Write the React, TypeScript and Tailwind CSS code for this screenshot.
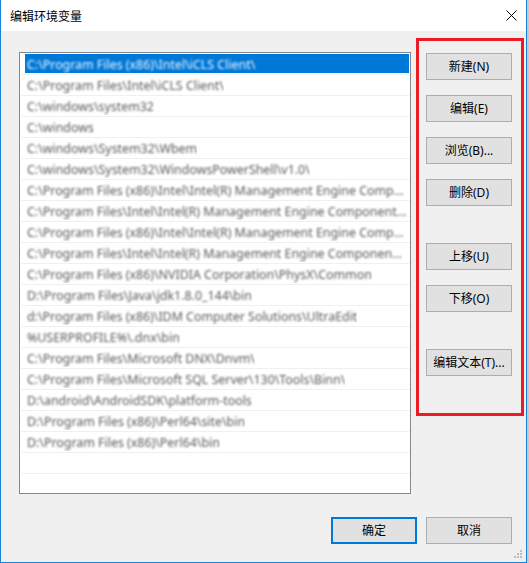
import React from "react";

const items = [
  "C:\\Program Files (x86)\\Intel\\iCLS Client\\",
  "C:\\Program Files\\Intel\\iCLS Client\\",
  "C:\\windows\\system32",
  "C:\\windows",
  "C:\\windows\\System32\\Wbem",
  "C:\\windows\\System32\\WindowsPowerShell\\v1.0\\",
  "C:\\Program Files (x86)\\Intel\\Intel(R) Management Engine Comp...",
  "C:\\Program Files\\Intel\\Intel(R) Management Engine Component...",
  "C:\\Program Files (x86)\\Intel\\Intel(R) Management Engine Comp...",
  "C:\\Program Files\\Intel\\Intel(R) Management Engine Componen...",
  "C:\\Program Files (x86)\\NVIDIA Corporation\\PhysX\\Common",
  "D:\\Program Files\\Java\\jdk1.8.0_144\\bin",
  "d:\\Program Files (x86)\\IDM Computer Solutions\\UltraEdit",
  "%USERPROFILE%\\.dnx\\bin",
  "C:\\Program Files\\Microsoft DNX\\Dnvm\\",
  "C:\\Program Files\\Microsoft SQL Server\\130\\Tools\\Binn\\",
  "D:\\android\\AndroidSDK\\platform-tools",
  "D:\\Program Files (x86)\\Perl64\\site\\bin",
  "D:\\Program Files (x86)\\Perl64\\bin",
  "",
  "",
];

const font = { fontFamily: '"Noto Sans", "Noto Sans CJK SC", sans-serif' };

function Btn({ label, primary }: { label: string; primary?: boolean }) {
  return (
    <div
      className={
        "w-[86px] h-[27px] flex items-center justify-center bg-[#e1e1e1] text-[12px] text-black leading-none " +
        (primary ? "border-2 border-[#0078d7]" : "border border-[#adadad]")
      }
    >
      {label}
    </div>
  );
}

export default function App() {
  return (
    <div className="w-[529px] h-[563px] bg-[#c9c9c9] overflow-hidden" style={font}>
      <div className="w-[527px] h-[563px] bg-[#f0f0f0] border-l border-r border-b border-[#1883d7] flex flex-col relative">
        {/* Title bar */}
        <div className="h-[31px] bg-white flex items-center justify-between pl-[9px] pr-[9px] shrink-0">
          <span
            className="text-[12px] text-black leading-none"
            style={{ fontFamily: '"Noto Sans CJK SC", sans-serif' }}
          >
            编辑环境变量
          </span>
          <svg width="11" height="11" viewBox="0 0 11 11">
            <path d="M0.5 0.5 L10.5 10.5 M10.5 0.5 L0.5 10.5" stroke="#000" strokeWidth="1" />
          </svg>
        </div>

        {/* Body */}
        <div className="flex items-start pl-[18px]">
          {/* List */}
          <div className="mt-[21px] w-[392px] h-[442px] border border-[#828790] bg-white overflow-hidden pt-px pl-px">
            {items.map((t, i) => (
              <div key={i} className="h-[21px] border-b border-[#f0f0f0] flex items-start">
                {i === 0 ? (
                  <div className="ml-[4px] mr-px flex-1 h-[19px] bg-[#0078d7] flex items-center pl-[2px] pt-[4px] overflow-hidden">
                    <span className="text-[12.4px] text-[#eef5fc] whitespace-nowrap blur-[0.8px] leading-none">
                      {t}
                    </span>
                  </div>
                ) : (
                  <div className="h-[19px] flex items-center pl-[6px] pt-[4px] overflow-hidden">
                    <span className="text-[12.4px] text-[#5a5a5a] whitespace-nowrap blur-[0.8px] leading-none">
                      {t}
                    </span>
                  </div>
                )}
              </div>
            ))}
          </div>

          {/* Buttons in red frame */}
          <div className="ml-[5px] mt-[7px] w-[108px] h-[378px] border-[3px] border-[#ed1c24] pl-[7px] pt-[12px] flex flex-col">
            <div className="flex flex-col gap-[15px]">
              <Btn label="新建(N)" />
              <Btn label="编辑(E)" />
              <Btn label="浏览(B)..." />
              <Btn label="删除(D)" />
            </div>
            <div className="flex flex-col gap-[15px] mt-[37px]">
              <Btn label="上移(U)" />
              <Btn label="下移(O)" />
            </div>
            <div className="mt-[37px]">
              <Btn label="编辑文本(T)..." />
            </div>
          </div>
        </div>

        {/* Footer */}
        <div className="flex justify-end gap-[9px] mt-[23px] pr-[14px]">
          <Btn label="确定" primary />
          <Btn label="取消" />
        </div>

        {/* resize grip */}
        <svg width="9" height="9" viewBox="0 0 9 9" className="absolute right-[3px] bottom-[3px]">
          <rect x="6" y="0" width="2" height="2" fill="#bcbcbc" />
          <rect x="3" y="3" width="2" height="2" fill="#bcbcbc" />
          <rect x="6" y="3" width="2" height="2" fill="#bcbcbc" />
          <rect x="0" y="6" width="2" height="2" fill="#bcbcbc" />
          <rect x="3" y="6" width="2" height="2" fill="#bcbcbc" />
          <rect x="6" y="6" width="2" height="2" fill="#bcbcbc" />
        </svg>
      </div>
    </div>
  );
}
